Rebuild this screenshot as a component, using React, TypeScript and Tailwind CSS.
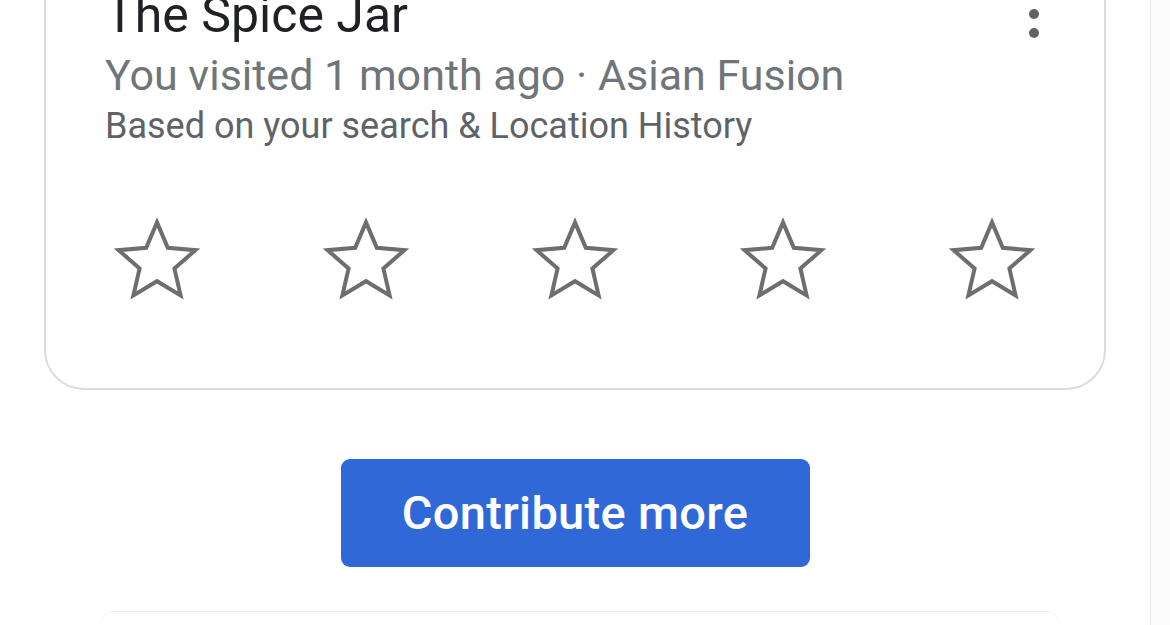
import React from "react";

const Star = () => (
  <svg width="96" height="96" viewBox="0 0 24 24" className="block">
    <polygon
      points="12,2.6 14.7,8.95 21.6,9.55 16.35,14.1 17.9,20.85 12,17.3 6.1,20.85 7.65,14.1 2.4,9.55 9.3,8.95"
      fill="none"
      stroke="#6e6e6e"
      strokeWidth="1"
      strokeLinejoin="miter"
    />
  </svg>
);

export default function App() {
  return (
    <div className="w-[1170px] h-[625px] overflow-hidden bg-white flex" style={{ fontFamily: "Roboto, 'Noto Sans', sans-serif" }}>
      <div className="w-[1150px] flex flex-col">
        <div className="relative ml-[44px] w-[1062px] -mt-[60px] rounded-[40px] border-2 border-[#dcdcdc] bg-white">
          <div className="absolute right-[65px] top-[48px] flex flex-col gap-[9px]">
            <span className="block w-[10px] h-[10px] rounded-full bg-[#5f6368]" />
            <span className="block w-[10px] h-[10px] rounded-full bg-[#5f6368]" />
            <span className="block w-[10px] h-[10px] rounded-full bg-[#5f6368]" />
          </div>
          <div className="pl-[59px] pt-[45px]">
            <div className="text-[50px] leading-[56px] text-[#202124]">The Spice Jar</div>
            <div className="text-[43px] leading-[52px] text-[#70757a] mt-[6px]">You visited 1 month ago · Asian Fusion</div>
            <div className="text-[36px] leading-[44px] text-[#5f6368] mt-[3px]">Based on your search &amp; Location History</div>
          </div>
          <div className="ml-[63px] w-[931px] flex justify-between mt-[64px] mb-[80px]">
            <Star />
            <Star />
            <Star />
            <Star />
            <Star />
          </div>
        </div>
        <div className="flex justify-center mt-[69px]">
          <button className="w-[469px] h-[108px] rounded-[9px] bg-[#3068d8] text-white text-[47px] font-medium tracking-[0.3px]">
            Contribute more
          </button>
        </div>
        <div className="ml-[100px] w-[960px] mt-[44px] h-[40px] rounded-t-[24px] border-t border-[#eeeeee]" />
      </div>
      <div className="w-[20px] h-full border-l border-[#e6e6e6] bg-[#fcfcfc]" />
    </div>
  );
}
